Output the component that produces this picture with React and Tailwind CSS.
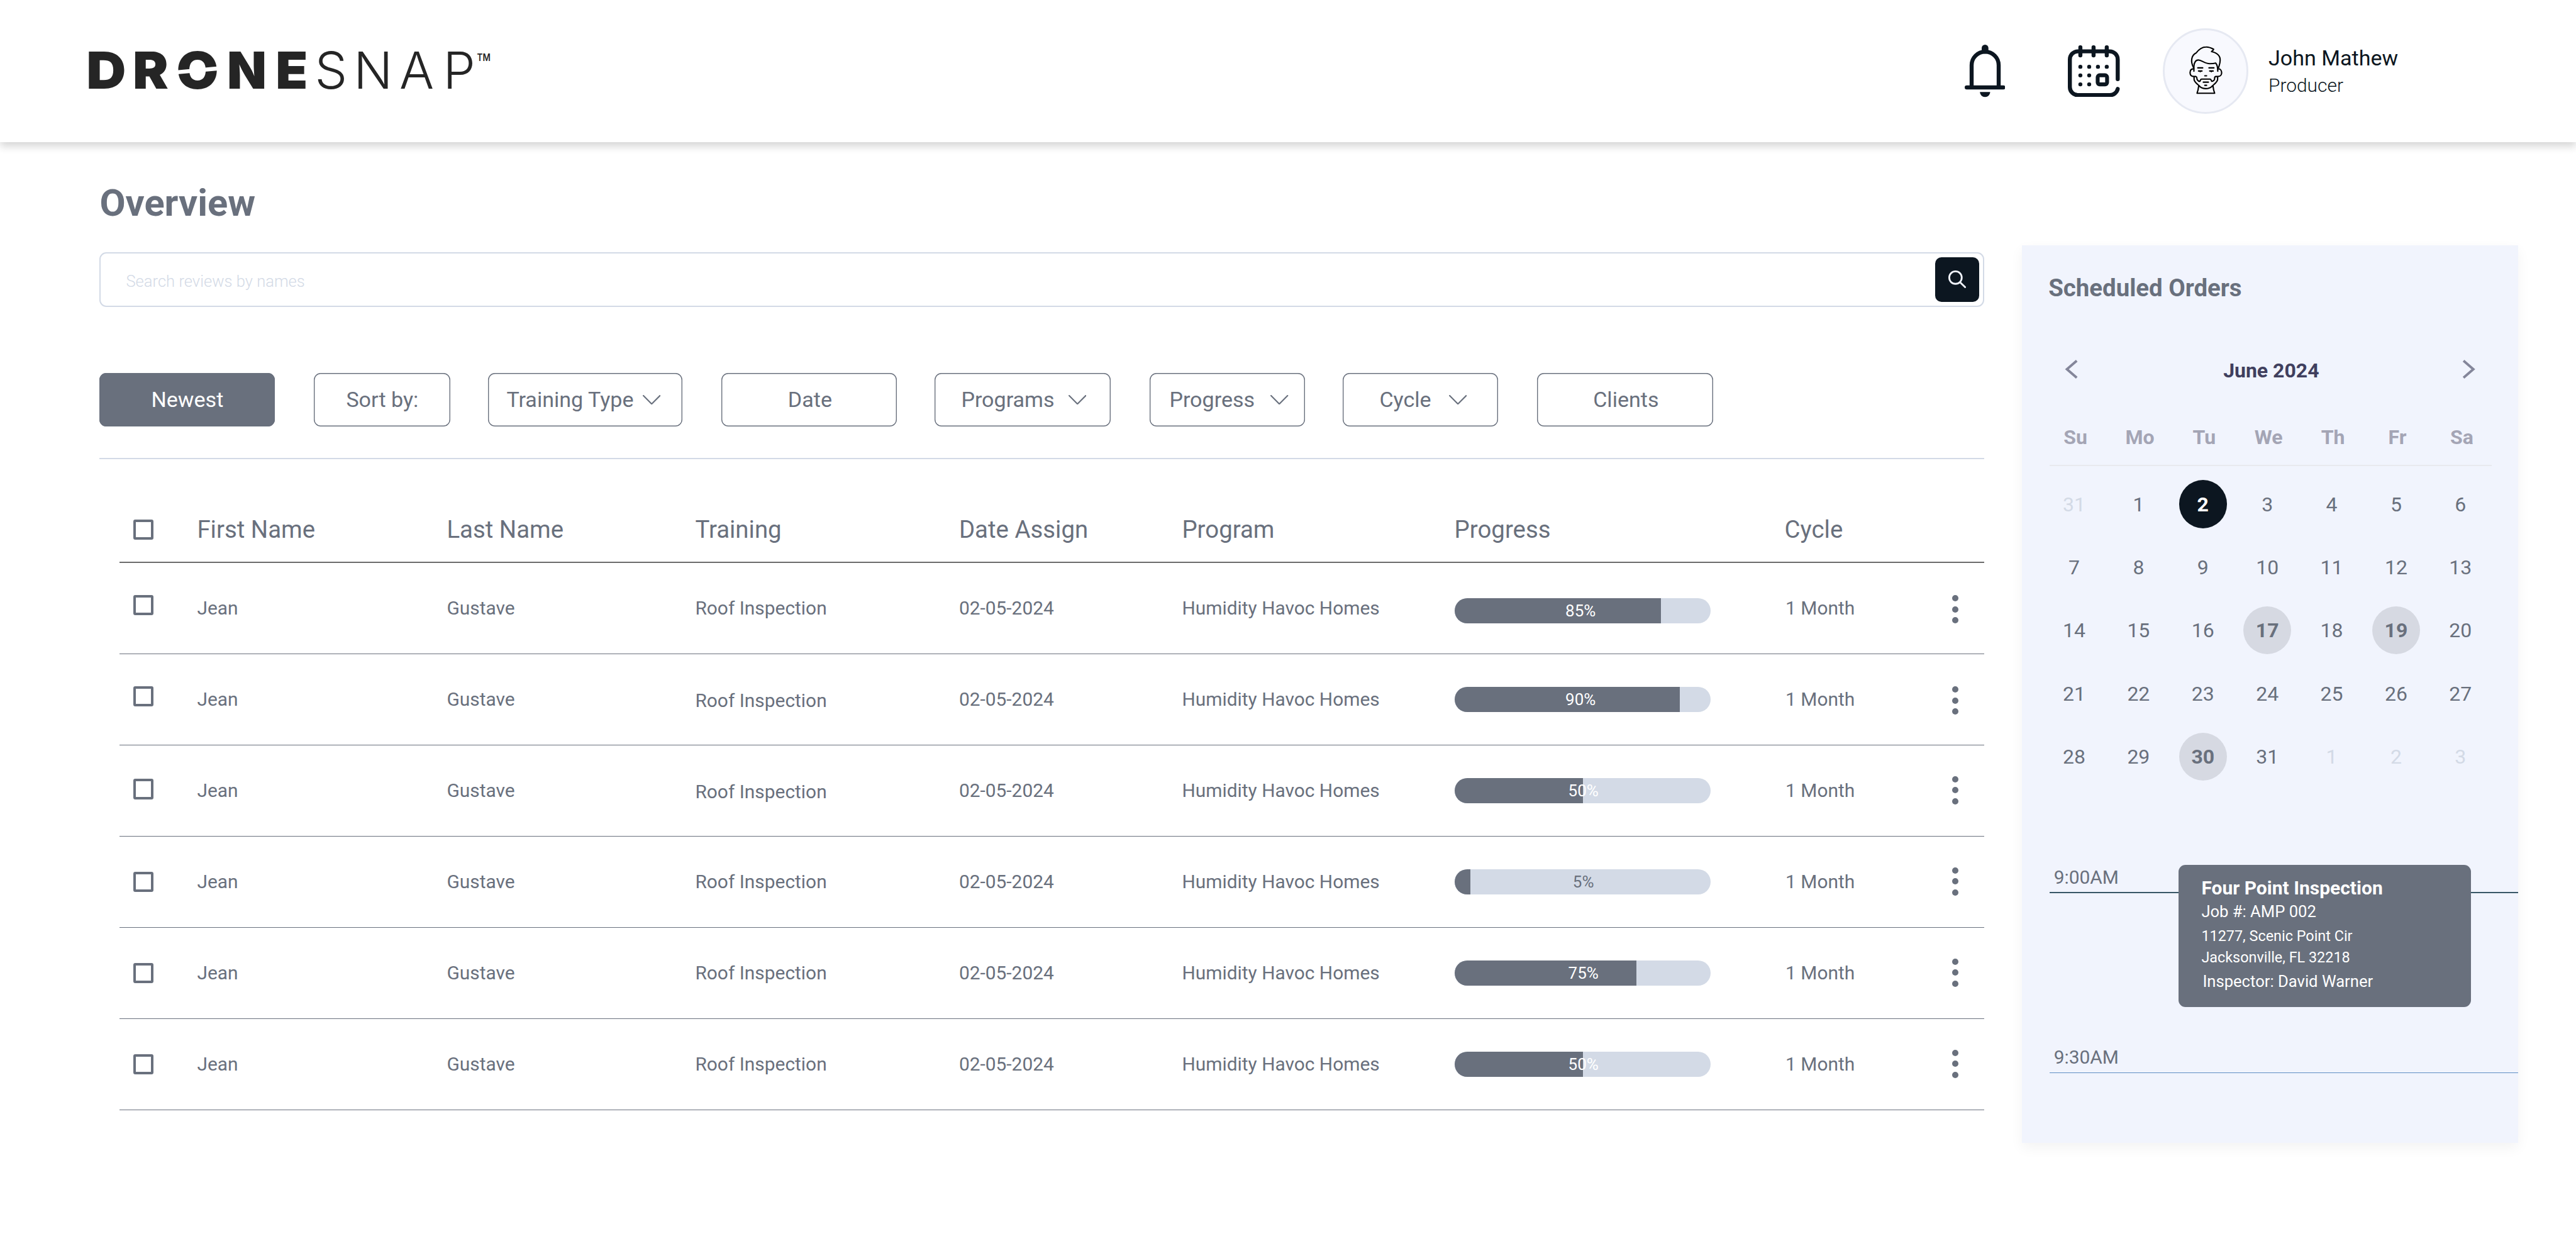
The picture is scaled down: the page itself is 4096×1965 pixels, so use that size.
import clsx from 'clsx';

const FILTERS = [
  { label: 'Newest', box: 'w-[279px] justify-center bg-[#69707d] text-white' },
  { label: 'Sort by:', box: 'ml-[62px] w-[217px] justify-center' },
  { label: 'Training Type', box: 'ml-[60px] w-[309px] gap-[14px] pl-[29px]', chevron: true },
  { label: 'Date', box: 'ml-[62px] w-[279px] justify-center pl-[2px]' },
  { label: 'Programs', box: 'ml-[60px] w-[280px] gap-[22px] pl-[42px]', chevron: true },
  { label: 'Progress', box: 'ml-[62px] w-[247px] gap-[25px] pl-[31px]', chevron: true },
  { label: 'Cycle', box: 'ml-[60px] w-[247px] gap-[28px] pl-[58px]', chevron: true },
  { label: 'Clients', box: 'ml-[62px] w-[280px] justify-center pl-[2px]' },
];

const COLUMNS = ['First Name', 'Last Name', 'Training', 'Date Assign', 'Program', 'Progress', 'Cycle'];

// fill is the drawn width of the bar, which is not always equal to the label
const ROWS = [
  { id: 1, percent: 85, fill: 80.6, check: 'mb-[10px]', training: '', bar: 'mt-[8px]', text: 'pr-[6px] text-white', dots: 'mt-[3px]' },
  { id: 2, percent: 90, fill: 88, check: 'mb-[10px]', training: 'mt-[4px]', bar: '', text: 'pr-[6px] text-white', dots: 'mt-[3px]' },
  { id: 3, percent: 50, fill: 50.2, check: 'mb-[5px]', training: 'mt-[4px]', bar: '', text: 'pl-[3px] text-white', dots: 'mb-[2px]' },
  { id: 4, percent: 5, fill: 6.2, check: '', training: '', bar: '', text: 'pl-[3px] text-[#69707d]', dots: 'mb-[2px]' },
  { id: 5, percent: 75, fill: 71, check: '', training: '', bar: '', text: 'pl-[3px] text-white', dots: 'mb-[2px]' },
  { id: 6, percent: 50, fill: 50.2, check: '', training: '', bar: '', text: 'pl-[3px] text-white', dots: 'mb-[2px]' },
];

const WEEKDAYS = ['Su', 'Mo', 'Tu', 'We', 'Th', 'Fr', 'Sa'];

const DAYS = [
  { day: 31, type: 'muted' },
  ...Array.from({ length: 31 }, (_, i) => ({ day: i + 1, type: 'normal' })),
  { day: 1, type: 'muted' },
  { day: 2, type: 'muted' },
  { day: 3, type: 'muted' },
];

const SELECTED = 2;
const BOOKED = [17, 19, 30];

const TABLE_GRID =
  'grid grid-cols-[123.5px_397px_395px_419.5px_354.5px_433.2px_525px_1fr] items-center';

function Logo() {
  return (
    <svg viewBox="190 84 920 150" className="h-[106.7px] w-[654.2px] shrink-0 overflow-visible fill-[#252525]">
      <g fontFamily="Inter, sans-serif">
        {/* the heavy half is set a little wider than the font */}
        <g fontSize="115" fontWeight="900">
          <text transform="translate(193 197.5) scale(1.07 1)">D</text>
          <text transform="translate(297 197.5) scale(1.04 1)">R</text>
          <text transform="translate(394.5 197.5) scale(1.06 1)">O</text>
          <text transform="translate(508 197.5)">N</text>
          <text transform="translate(616.5 197.5) scale(1.02 1)">E</text>
        </g>
        <text x="704 791 893 991" y="197.5" fontSize="115" fontWeight="300">SNAP</text>
        <text x="1067" y="136" fontSize="23" fontWeight="600" textLength="30" lengthAdjust="spacingAndGlyphs">TM</text>
      </g>
      {/* slanted cut through the O */}
      <path d="M392 161.5 L500 151.5" stroke="#fff" strokeWidth="9" />
    </svg>
  );
}

function BellIcon() {
  return (
    <svg viewBox="0 0 91 117" className="h-[83.2px] w-[64.7px] shrink-0 fill-[#0c1620]">
      <path d="M15.5 95V46a30.25 30.25 0 0 1 60.5 0v49" fill="none" stroke="#0c1620" strokeWidth="9" />
      <rect x="38" y="0" width="15" height="20" rx="7.5" />
      <rect x="0" y="91" width="91" height="9.3" rx="4.6" />
      <path d="M34 106h23a11.5 11 0 0 1-23 0z" />
    </svg>
  );
}

function CalendarIcon() {
  return (
    <svg
      viewBox="0 0 116 116"
      className="ml-[99.6px] size-[82.5px] shrink-0 fill-none stroke-[#0c1620]"
      strokeWidth="9"
      strokeLinecap="round"
    >
      <path d="M111.5 75.5V31.5a18 18 0 0 0-18-18h-71a18 18 0 0 0-18 18v62a18 18 0 0 0 18 18h71a18 18 0 0 0 18-14" />
      <path d="M28 4.5v18M57.5 4.5v18M87 4.5v18" />
      <path d="M28 48h.01M47.7 48h.01M67.3 48h.01M87 48h.01M28 67.3h.01M47.7 67.3h.01M28 87.3h.01M47.7 87.3h.01" />
      <rect x="66.7" y="67" width="21" height="20.4" rx="4.3" strokeWidth="8.6" />
    </svg>
  );
}

function Avatar() {
  return (
    <div className="ml-[68.9px] flex size-[136px] shrink-0 items-center justify-center rounded-full border-3 border-[#e6e9f2] bg-[#f8f9fe]">
      <svg
        viewBox="6 -3 480 480"
        className="size-[113.8px] shrink-0 fill-none stroke-black"
        strokeWidth="9"
        strokeLinecap="round"
        strokeLinejoin="round"
      >
        <path d="M161 213C140 175 146 130 180 115C200 88 220 76 245 76C265 75 280 82 296 91C295 100 287 98 282 107C315 115 341 128 340 165C340 185 334 200 330 213" />
        <path d="M164 238V205C166 180 176 164 192 163C215 162 235 187 270 188C290 188 300 187 310 184C320 195 324 205 324 238" />
        <path d="M163 222C145 222 138 235 138 249C139 266 150 274 165 274H178C187 276 182 287 186 295C190 301 199 307 204 306C210 300 206 291 216 291H272C282 291 278 302 284 306C290 307 300 300 302 293C304 283 300 276 310 274H325C342 274 350 262 350 249C350 235 342 222 327 222" />
        <path d="M165 276V292C165 312 190 325 205 342C215 352 225 355 244 355C262 355 272 352 283 342C298 325 323 312 323 292V276" />
        <path d="M196 338C194 355 192 368 185 386H303C296 368 294 355 292 338" />
        <path d="M190 216H223M265 216H298M195 237H218M270 237H293M237 269H249M227 312H261M237 333H249" />
        <path d="M206.500 241.500h.01M281 241.500h.01" />
      </svg>
    </div>
  );
}

function Header() {
  return (
    <header className="relative flex h-[226px] items-center bg-white pl-[135.1px] shadow-[0_7px_12px_rgba(0,0,0,0.16)]">
      <Logo />
      <div className="ml-[2334.5px] flex items-center">
        <BellIcon />
        <CalendarIcon />
        <Avatar />
        <div className="ml-[31.6px] pt-[3.6px] whitespace-nowrap text-[#0c1620]">
          <p className="text-[34.1px] leading-[42px]">John Mathew</p>
          <p className="text-[29.9px] leading-[45.4px] font-light">Producer</p>
        </div>
      </div>
    </header>
  );
}

function SearchBar() {
  return (
    <div className="mt-[42.7px] flex h-[87.4px] items-center justify-between rounded-[11px] border-2 border-[#d3dae6] pr-[6px] pl-[40px]">
      <span className="pt-[5px] text-[25.6px] font-light text-[#d3dae6]">Search reviews by names</span>
      <button className="flex size-[70.6px] items-center justify-center rounded-[10px] bg-[#0c1620]">
        <svg viewBox="0 0 40 40" className="size-[28.4px] fill-none stroke-[#f1f4fd]" strokeWidth="4" strokeLinecap="round">
          <circle cx="16" cy="16" r="14" />
          <path d="M27 27l10.500 10.500" />
        </svg>
      </button>
    </div>
  );
}

function Filters() {
  return (
    <div className="mt-[104.6px] flex text-[34.1px]">
      {FILTERS.map((filter) => (
        <button
          key={filter.label}
          className={clsx(
            'flex h-[85.3px] shrink-0 items-center rounded-[11px] whitespace-nowrap shadow-[inset_0_0_0_1.4px_#69707d]',
            filter.box
          )}
        >
          {filter.label}
          {filter.chevron && (
            <svg viewBox="0 0 40 22" className="h-[15.6px] w-[28.4px] fill-none stroke-[#69707d]" strokeWidth="3" strokeLinecap="round" strokeLinejoin="round">
              <path d="M1.500 1.500L20 20L38.500 1.500" />
            </svg>
          )}
        </button>
      ))}
    </div>
  );
}

function Checkbox({ className }) {
  return <span className={clsx('ml-[22px] block size-[32.5px] rounded-[3px] border-4 border-[#69707d]', className)} />;
}

function ProgressBar({ row }) {
  return (
    <div className={clsx('relative h-[40.4px] w-[407.2px] overflow-hidden rounded-full bg-[#d3dae6]', row.bar)}>
      <div className="h-full bg-[#69707d]" style={{ width: `${row.fill}%` }} />
      <span className={clsx('absolute inset-0 flex items-center justify-center text-[26px]', row.text)}>
        {row.percent}%
      </span>
    </div>
  );
}

function OrdersTable() {
  return (
    <div className="mt-[60.6px] ml-[31.5px] whitespace-nowrap">
      <div className={clsx(TABLE_GRID, 'h-[104.3px] border-b-2 border-[#6b6b6b] text-[38.4px]')}>
        <Checkbox />
        {COLUMNS.map((column) => (
          <span key={column}>{column}</span>
        ))}
      </div>
      {ROWS.map((row) => (
        <div key={row.id} className={clsx(TABLE_GRID, 'h-[145px] border-b border-[#69707d] text-[29.9px]')}>
          <Checkbox className={row.check} />
          <span>Jean</span>
          <span>Gustave</span>
          <span className={row.training}>Roof Inspection</span>
          <span>02-05-2024</span>
          <span>Humidity Havoc Homes</span>
          <ProgressBar row={row} />
          <div className="flex items-center pl-[1.500px]">
            <span className="w-[265px] shrink-0">1 Month</span>
            <span className={clsx('flex flex-col gap-[7.6px]', row.dots)}>
              <i className="size-[10px] rounded-full bg-[#69707d]" />
              <i className="size-[10px] rounded-full bg-[#69707d]" />
              <i className="size-[10px] rounded-full bg-[#69707d]" />
            </span>
          </div>
        </div>
      ))}
    </div>
  );
}

function MonthArrow({ d }) {
  return (
    <svg viewBox="0 0 30 42" className="mb-[4px] h-[30px] w-[21.3px] fill-none stroke-[#84869a]" strokeWidth="5.500">
      <path d={d} />
    </svg>
  );
}

function Calendar() {
  return (
    <>
      <div className="mt-[87.3px] mr-[67.800px] ml-[67.9px] flex h-[40px] items-center justify-between">
        <MonthArrow d="M27 2L5 21L27 40" />
        <span className="pl-[3px] text-[32px] leading-[40px] font-bold text-[#403f5e]">June 2024</span>
        <MonthArrow d="M3 2L25 21L3 40" />
      </div>
      <div className="mt-[66.4px] ml-[33.7px] grid h-[40px] grid-cols-[repeat(7,102.4px)] text-center text-[32px] leading-[40px] font-bold text-[#a4a5b5]">
        {WEEKDAYS.map((name) => (
          <span key={name}>{name}</span>
        ))}
      </div>
      <div className="mt-[23.9px] mr-[42px] ml-[43.5px] h-[2px] bg-[#e8e9ee]" />
      <div className="mt-[10.500px] ml-[31.6px] grid auto-rows-[100.3px] grid-cols-[repeat(7,102.4px)] place-items-center text-[32px]">
        {DAYS.map(({ day, type }, i) => (
          <span
            key={i}
            className={clsx(
              'flex size-[76.4px] items-center justify-center rounded-full',
              type === 'muted' && 'text-[#d3dae6]',
              type === 'normal' && day === SELECTED && 'bg-[#0c1620] font-bold text-white',
              type === 'normal' && BOOKED.includes(day) && 'bg-[#d6d9e2] font-bold'
            )}
          >
            {day}
          </span>
        ))}
      </div>
    </>
  );
}

function Schedule() {
  return (
    <div className="ml-[43.5px] text-[29.9px] leading-[36px]">
      <div className="relative mt-[123.8px] h-[43.4px] border-b-2 border-[#385666] pl-[7px]">
        9:00AM
        {/* booked event sits over the time lines */}
        <div className="absolute top-[-1.4px] left-[205.7px] h-[225.9px] w-[465px] rounded-[11px] bg-[#69707d] pt-[18px] pl-[36px] whitespace-nowrap text-white">
          <p className="text-[30px] leading-[37px] font-bold">Four Point Inspection</p>
          <p className="text-[25.6px] leading-[38px]">Job #: AMP 002</p>
          <p className="text-[23.4px] leading-[40px]">11277, Scenic Point Cir</p>
          <p className="text-[23.4px] leading-[29px]">Jacksonville, FL 32218</p>
          <p className="pl-[2px] text-[25.6px] leading-[46px]">Inspector: David Warner</p>
        </div>
      </div>
      <div className="mt-[242.4px] h-[43.400px] border-b border-[#5f8fc4] pl-[7px]">9:30AM</div>
    </div>
  );
}

export default function App() {
  return (
    <div className="h-[1965px] w-[4096px] overflow-hidden bg-white font-[Roboto,sans-serif] text-[#69707d]">
      <Header />
      <div className="flex items-start">
        <main className="ml-[158.4px] w-[2996.8px] shrink-0">
          <h1 className="mt-[62.3px] text-[59.7px] leading-[70px] font-bold">Overview</h1>
          <SearchBar />
          <Filters />
          <div className="mt-[50px] h-[2px] bg-[#d3dae6]" />
          <OrdersTable />
        </main>

        <aside className="mt-[164.4px] ml-[60px] h-[1427px] w-[789.2px] shrink-0 bg-[#f1f4fd] pt-[45px] shadow-[0_8px_20px_rgba(0,0,0,0.05)]">
          <h2 className="ml-[42px] text-[38.4px] leading-[46px] font-bold">Scheduled Orders</h2>
          <Calendar />
          <Schedule />
        </aside>
      </div>
    </div>
  );
}
